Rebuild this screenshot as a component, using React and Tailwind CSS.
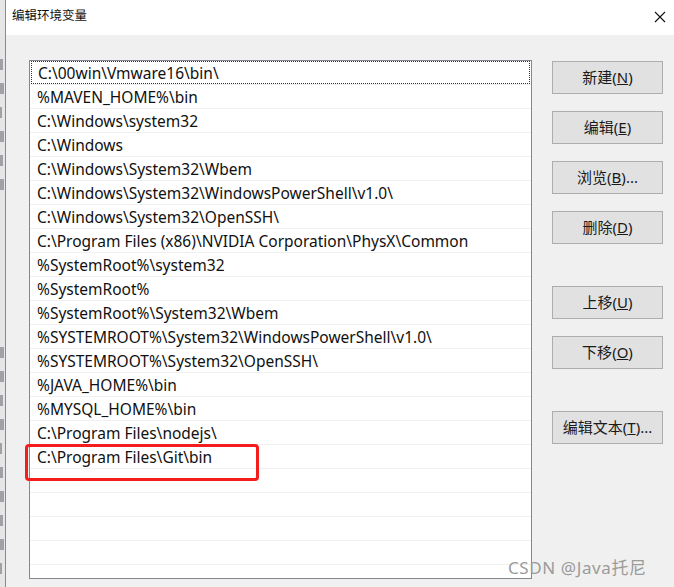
import React from 'react';

const paths = [
  'C:\\00win\\Vmware16\\bin\\',
  '%MAVEN_HOME%\\bin',
  'C:\\Windows\\system32',
  'C:\\Windows',
  'C:\\Windows\\System32\\Wbem',
  'C:\\Windows\\System32\\WindowsPowerShell\\v1.0\\',
  'C:\\Windows\\System32\\OpenSSH\\',
  'C:\\Program Files (x86)\\NVIDIA Corporation\\PhysX\\Common',
  '%SystemRoot%\\system32',
  '%SystemRoot%',
  '%SystemRoot%\\System32\\Wbem',
  '%SYSTEMROOT%\\System32\\WindowsPowerShell\\v1.0\\',
  '%SYSTEMROOT%\\System32\\OpenSSH\\',
  '%JAVA_HOME%\\bin',
  '%MYSQL_HOME%\\bin',
  'C:\\Program Files\\nodejs\\',
  'C:\\Program Files\\Git\\bin',
];

const font = { fontFamily: '"Noto Sans", "Noto Sans CJK SC", sans-serif' };

function Btn({ label, hot, tail = '' }) {
  return (
    <button className="w-[111px] h-[33px] bg-[#e1e1e1] border border-[#adadad] text-[15px] text-[#1a1a1a] flex items-center justify-center">
      {label}(<span className="underline">{hot}</span>){tail}
    </button>
  );
}

// scraps of the window behind the dialog (drawn as marks, not text)
const marksTop = ['w-[3px]', 'w-[4px]', 'w-[2px]', 'w-[4px]', 'w-[3px]', 'w-[4px]'];
const marksBottom = ['w-[4px]', 'w-[4px]', 'w-[3px]', 'w-[4px]', 'w-[2px]', 'w-[3px]', 'w-[4px]', 'w-[3px]', 'w-[4px]', 'w-[2px]'];

export default function App() {
  const rows = [...paths, '', '', '', '', ''];
  return (
    <div className="relative w-[674px] h-[587px] flex bg-[#f0f0f0] overflow-hidden" style={font}>
      {/* background window strip */}
      <div className="w-[5px] shrink-0 bg-[#e6e6e6] flex flex-col pt-[52px]">
        {marksTop.map((w, i) => (
          <div key={i} className="h-[24px] flex items-center">
            <div className={w + ' h-[11px] bg-[#3a3a4a] opacity-40'} />
          </div>
        ))}
        <div className="h-[144px]" />
        {marksBottom.map((w, i) => (
          <div key={'b' + i} className="h-[24px] flex items-center">
            <div className={w + ' h-[11px] bg-[#3a3a4a] opacity-40'} />
          </div>
        ))}
      </div>

      <div className="flex-1 flex flex-col border-l border-[#8a8a8a]">
        {/* title bar */}
        <div className="h-[35px] bg-white flex items-center justify-between pl-[6px] pr-[6px] pb-[2px]">
          <span className="text-[12.5px] text-[#111]">编辑环境变量</span>
          <svg width="12" height="12" viewBox="0 0 12 12" className="mr-[2px]">
            <path d="M1 1 L11 11 M11 1 L1 11" stroke="#111" strokeWidth="1.1" />
          </svg>
        </div>

        {/* body */}
        <div className="flex-1 flex pl-[23px] pt-[25px]">
          <div className="w-[503px] h-[519px] bg-white border border-[#828790] overflow-hidden">
            {rows.map((p, i) => (
              <div key={i} className="h-[24px] border-b border-[#f0f0f0] px-[1px] flex">
                <div
                  className={
                    'flex-1 flex items-center pl-[6px] pt-[2px] text-[15.5px] text-[#111] whitespace-nowrap ' +
                    (i === 0 ? 'border border-dotted border-[#333]' : '')
                  }
                >
                  {p}
                </div>
              </div>
            ))}
          </div>

          <div className="ml-[20px] pt-[1px] flex flex-col">
            <div className="flex flex-col gap-[17px]">
              <Btn label="新建" hot="N" />
              <Btn label="编辑" hot="E" />
              <Btn label="浏览" hot="B" tail="..." />
              <Btn label="删除" hot="D" />
            </div>
            <div className="flex flex-col gap-[17px] mt-[42px]">
              <Btn label="上移" hot="U" />
              <Btn label="下移" hot="O" />
            </div>
            <div className="mt-[42px]">
              <Btn label="编辑文本" hot="T" tail="..." />
            </div>
          </div>
        </div>
      </div>

      {/* annotation */}
      <div className="absolute left-[25px] top-[444px] w-[234px] h-[37px] border-[3px] border-[#f41d1d] rounded-[4px]" />
      <div className="absolute left-[508px] top-[555px] text-[17px] tracking-[0.6px] text-[#9b9b9b] whitespace-nowrap">
        CSDN @Java托尼
      </div>
    </div>
  );
}
